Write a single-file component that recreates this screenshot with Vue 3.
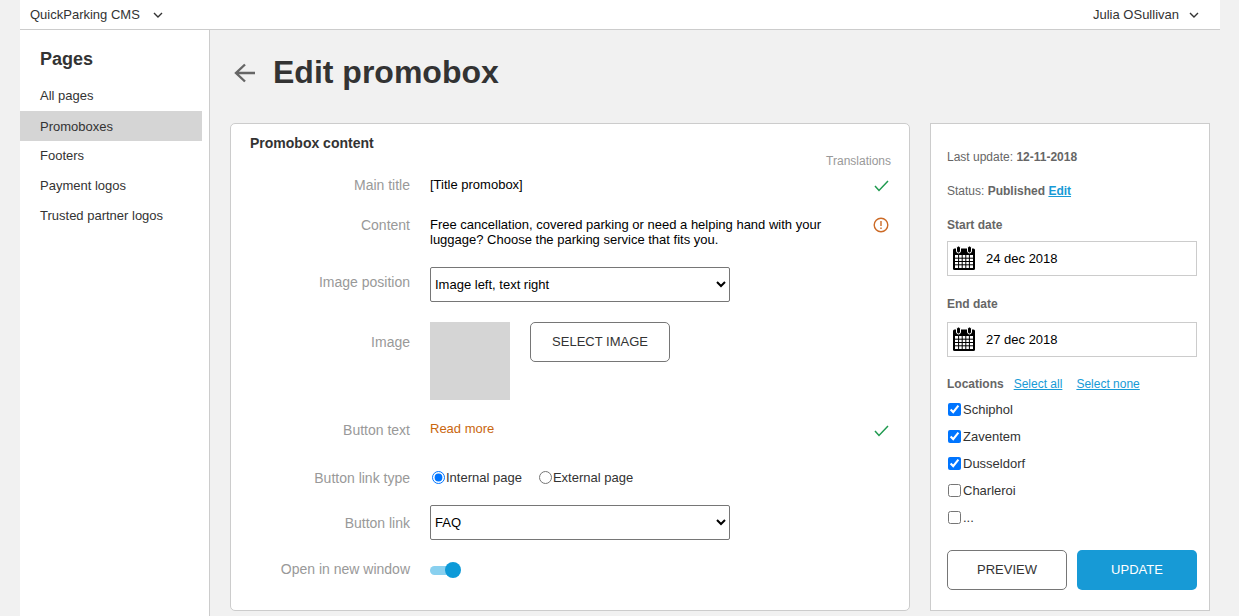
<script setup>
const navItems = [
  { label: 'All pages', active: false },
  { label: 'Promoboxes', active: true },
  { label: 'Footers', active: false },
  { label: 'Payment logos', active: false },
  { label: 'Trusted partner logos', active: false },
]
const dates = [
  { label: 'Start date', value: '24 dec 2018' },
  { label: 'End date', value: '27 dec 2018' },
]
const locations = [
  { name: 'Schiphol', checked: true },
  { name: 'Zaventem', checked: true },
  { name: 'Dusseldorf', checked: true },
  { name: 'Charleroi', checked: false },
  { name: '...', checked: false },
]
</script>

<template>
  <div class="page">
    <div class="shell">
      <header class="topbar">
        <div class="top-item">
          <span>QuickParking CMS</span>
          <svg class="chev" viewBox="0 0 10 6"><path d="M1 1l4 4 4-4" /></svg>
        </div>
        <div class="top-item user">
          <span>Julia OSullivan</span>
          <svg class="chev" viewBox="0 0 10 6"><path d="M1 1l4 4 4-4" /></svg>
        </div>
      </header>
      <div class="body">
        <nav class="sidebar">
          <h2 class="side-title">Pages</h2>
          <a v-for="item in navItems" :key="item.label" class="nav-item" :class="{ active: item.active }">{{ item.label }}</a>
        </nav>
        <main class="main">
          <div class="heading">
            <svg class="back" viewBox="0 0 22 20"><path d="M21 10H2M11 1.500L2 10l9 8.500" /></svg>
            <h1>Edit promobox</h1>
          </div>
          <div class="columns">
            <section class="card">
              <h3 class="card-title">Promobox content</h3>
              <div class="trans">Translations</div>

              <div class="row r-title">
                <label class="lbl">Main title</label>
                <div class="val">[Title promobox]</div>
                <svg class="status" viewBox="0 0 16 16"><path class="ok" d="M2 9l4 4.500L15 4" /></svg>
              </div>

              <div class="row r-content">
                <label class="lbl">Content</label>
                <div class="val">Free cancellation, covered parking or need a helping hand with your luggage? Choose the parking service that fits you.</div>
                <svg class="status" viewBox="0 0 16 16">
                  <circle class="warn" cx="8" cy="8" r="6.800" />
                  <path class="warn" d="M8 4v5" />
                  <path class="warn" d="M8 10.500v1.500" />
                </svg>
              </div>

              <div class="row r-pos">
                <label class="lbl">Image position</label>
                <select class="sel"><option>Image left, text right</option></select>
              </div>

              <div class="row r-img">
                <label class="lbl">Image</label>
                <div class="img-box"></div>
                <button class="btn select-btn" type="button">SELECT IMAGE</button>
              </div>

              <div class="row r-btext">
                <label class="lbl">Button text</label>
                <div class="val orange">Read more</div>
                <svg class="status" viewBox="0 0 16 16"><path class="ok" d="M2 9l4 4.500L15 4" /></svg>
              </div>

              <div class="row r-type">
                <label class="lbl">Button link type</label>
                <label class="radio"><input type="radio" name="linktype" checked />Internal page</label>
                <label class="radio"><input type="radio" name="linktype" />External page</label>
              </div>

              <div class="row r-link">
                <label class="lbl">Button link</label>
                <select class="sel"><option>FAQ</option></select>
              </div>

              <div class="row r-open">
                <label class="lbl">Open in new window</label>
                <div class="toggle"><span class="knob"></span></div>
              </div>
            </section>

            <aside class="panel">
              <p class="meta first">Last update: <b>12-11-2018</b></p>
              <p class="meta second">Status: <b>Published</b> <a class="link bold">Edit</a></p>
              <div v-for="d in dates" :key="d.label" class="date-group">
                <div class="date-label">{{ d.label }}</div>
                <div class="date-input">
                  <svg class="cal" viewBox="0 0 22 24">
                    <rect x="0" y="2.500" width="22" height="21.500" rx="1.500" fill="#000" />
                    <rect x="3.500" y="0" width="4" height="7" rx="2" fill="#000" stroke="#fff" stroke-width="1" />
                    <rect x="14.500" y="0" width="4" height="7" rx="2" fill="#000" stroke="#fff" stroke-width="1" />
                    <path d="M2 9h18v13H2z" fill="#fff" />
                    <path d="M2 12.200h18M2 15.500h18M2 18.800h18M5.600 9v13M9.200 9v13M12.800 9v13M16.400 9v13" stroke="#000" stroke-width="1" fill="none" />
                  </svg>
                  <span>{{ d.value }}</span>
                </div>
              </div>
              <div class="loc-head">
                <b>Locations</b>
                <a class="link">Select all</a>
                <a class="link">Select none</a>
              </div>
              <label v-for="l in locations" :key="l.name" class="check">
                <input type="checkbox" :checked="l.checked" />{{ l.name }}
              </label>
              <div class="actions">
                <button class="btn outline" type="button">PREVIEW</button>
                <button class="btn primary" type="button">UPDATE</button>
              </div>
            </aside>
          </div>
        </main>
      </div>
    </div>
  </div>
</template>

<style>
html, body { margin: 0; background: #f1f1f1; overflow: hidden; }
</style>

<style scoped>
.page {
  height: 616px;
  overflow: hidden;
  background: #f1f1f1;
  padding: 0 19px 0 20px;
  font-family: "Liberation Sans", Arial, sans-serif;
  font-size: 13px;
  color: #333;
}
.shell { height: 616px; display: flex; flex-direction: column; }
.topbar {
  height: 29px;
  flex: none;
  background: #fff;
  border-bottom: 1px solid #ccc;
  display: flex;
  justify-content: space-between;
  align-items: center;
  padding: 0 21px 0 10px;
  font-size: 13px;
}
.top-item { display: flex; align-items: center; gap: 13px; }
.top-item.user { gap: 10px; }
.chev { width: 10px; height: 6px; fill: none; stroke: #333; stroke-width: 1.400; }
.body { flex: 1; display: flex; min-height: 0; }
.sidebar {
  width: 189px;
  flex: none;
  background: #fff;
  border-right: 1px solid #ccc;
  padding-top: 18px;
}
.side-title { margin: 0 0 11px 20px; font-size: 18px; line-height: 22px; font-weight: 700; color: #333; }
.nav-item { display: block; width: 162px; padding-left: 20px; height: 30px; line-height: 30px; color: #333; }
.nav-item.active { background: #d5d5d5; line-height: 32px; }
.main { flex: 1; padding-left: 20px; min-width: 0; }
.heading { height: 93px; display: flex; align-items: center; box-sizing: border-box; }
.back { width: 22px; height: 20px; margin-left: 4px; margin-right: 17px; fill: none; stroke: #666; stroke-width: 2.400; }
h1 { margin: 0; font-size: 32px; line-height: 40px; font-weight: 700; color: #333; position: relative; top: -5px; }
.heading .back { position: relative; top: -4px; }
.columns { display: flex; gap: 20px; align-items: flex-start; }
.card {
  width: 680px;
  height: 488px;
  box-sizing: border-box;
  background: #fff;
  border: 1px solid #ccc;
  border-radius: 5px;
  padding: 0 18px 0 0;
}
.card-title { margin: 11px 0 0 19px; font-size: 14px; line-height: 16px; font-weight: 700; color: #333; }
.trans { text-align: right; font-size: 12px; line-height: 14px; color: #999; margin-top: 3px; }
.row { display: flex; align-items: flex-start; }
.lbl { width: 179px; flex: none; margin-right: 20px; text-align: right; font-size: 14px; line-height: 16px; color: #999; }
.val { width: 400px; line-height: 14px; color: #000; font-size: 13px; }
.orange { color: #c9660e; }
.status { width: 16px; height: 16px; margin-left: 43px; flex: none; fill: none; }
.ok { stroke: #1f9a4f; stroke-width: 1.500; }
.warn { stroke: #cc6a26; stroke-width: 1.400; }
.r-title { margin-top: 9px; }
.r-title .val { margin-top: 1px; }
.r-content { margin-top: 24px; }
.r-content .val { width: 410px; line-height: 15px; }
.r-content .status { margin-left: 33px; }
.r-pos { margin-top: 20px; }
.r-pos .lbl { margin-top: 7px; }
.sel {
  width: 300px;
  height: 35px;
  background: #fff;
  border: 1px solid #767676;
  border-radius: 2px;
  font-family: inherit;
  font-size: 13px;
  color: #000;
  padding: 0;
}
.r-img { margin-top: 20px; height: 78px; }
.r-img .lbl { margin-top: 12px; }
.img-box { width: 80px; height: 78px; background: #d5d5d5; }
.btn { font-family: inherit; font-size: 13px; border-radius: 5px; box-sizing: border-box; cursor: pointer; padding: 0 0 2px; }
.select-btn {
  width: 140px;
  height: 40px;
  margin-left: 20px;
  background: #fff;
  border: 1px solid #767676;
  color: #333;
}
.r-btext { margin-top: 22px; }
.r-type { margin-top: 32px; }
.radio { display: flex; align-items: center; height: 15px; line-height: 14px; margin-right: 15px; color: #333; font-size: 13px; }
.radio input { margin: 0 1px 0 2px; width: 13px; height: 13px; }
.r-link { margin-top: 19px; }
.r-link .lbl { margin-top: 10px; }
.r-open { margin-top: 21px; }
.toggle { position: relative; width: 31px; height: 16px; margin-top: 1px; }
.toggle::before {
  content: "";
  position: absolute;
  left: 0;
  top: 4px;
  width: 28px;
  height: 9px;
  border-radius: 4.500px;
  background: #89d0ef;
}
.knob { position: absolute; right: 0; top: 0; width: 16px; height: 16px; border-radius: 50%; background: #0d9ad8; }
.panel {
  width: 280px;
  height: 488px;
  box-sizing: border-box;
  background: #fff;
  border: 1px solid #ccc;
  padding: 0 12px 0 16px;
  font-size: 12px;
  color: #666;
}
.meta { margin: 0; line-height: 14px; }
.meta.first { margin-top: 26px; }
.meta.second { margin-top: 20px; }
.link { color: #179ad6; text-decoration: underline; }
.link.bold { font-weight: 700; }
.date-group { margin-top: 20px; }
.date-group + .date-group { margin-top: 21px; }
.date-label { font-weight: 700; line-height: 14px; color: #666; }
.date-input {
  margin-top: 9px;
  height: 35px;
  box-sizing: border-box;
  border: 1px solid #ccc;
  display: flex;
  align-items: center;
  padding-left: 5px;
  font-size: 13px;
  color: #000;
}
.date-group + .date-group .date-input { margin-top: 11px; }
.cal { width: 22px; height: 24px; margin-right: 11px; margin-bottom: 2px; }
.loc-head { margin-top: 20px; display: flex; gap: 10px; line-height: 14px; }
.loc-head .link + .link { margin-left: 4px; }
.check { display: flex; align-items: center; height: 27px; font-size: 13px; color: #333; }
.loc-head + .check { margin-top: 5px; }
.check input { margin: 0 2px 0 1px; width: 13px; height: 13px; }
.actions { display: flex; gap: 10px; margin-top: 19px; }
.outline { width: 120px; height: 40px; background: #fff; border: 1px solid #767676; color: #333; }
.primary { width: 120px; height: 40px; background: #179ad6; border: 0; color: #fff; }
</style>
